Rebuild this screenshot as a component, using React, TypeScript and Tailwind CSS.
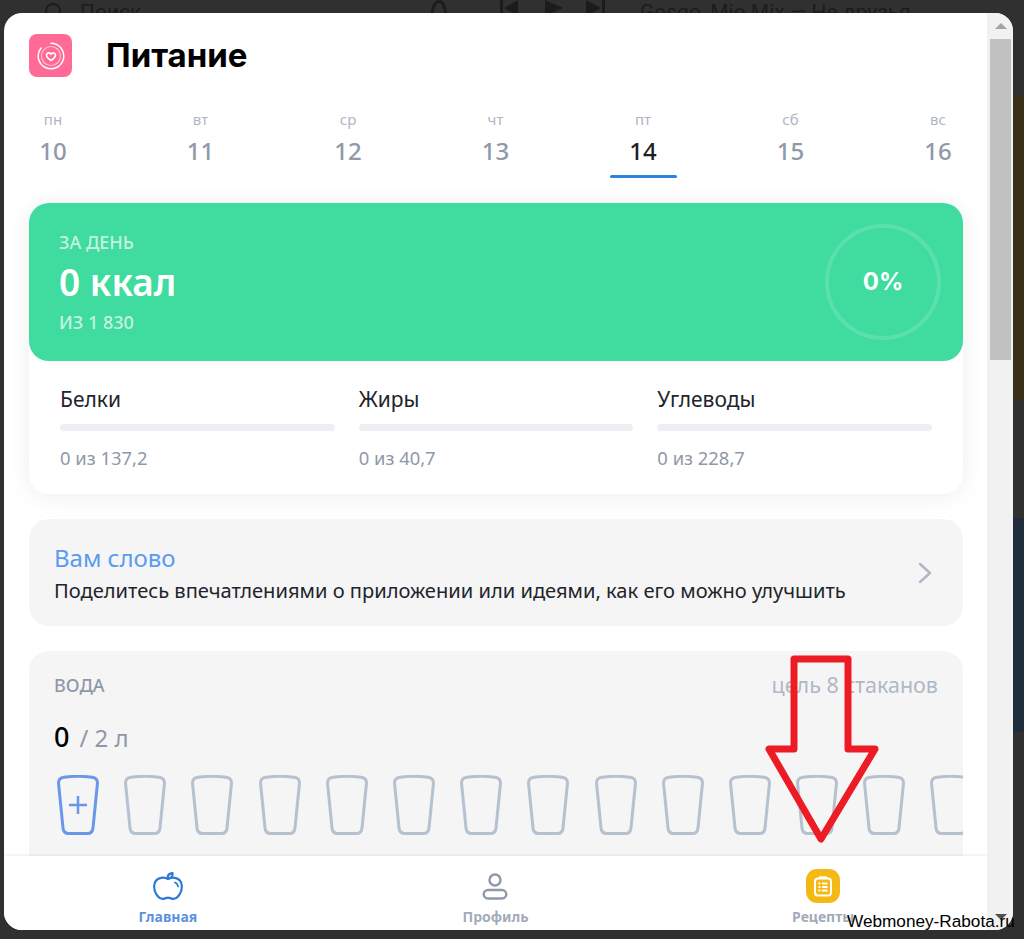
import React from 'react'

const days = [
  { name: 'пн', num: '10' },
  { name: 'вт', num: '11' },
  { name: 'ср', num: '12' },
  { name: 'чт', num: '13' },
  { name: 'пт', num: '14', active: true },
  { name: 'сб', num: '15' },
  { name: 'вс', num: '16' },
]

const macros = [
  { name: 'Белки', total: '0 из 137,2' },
  { name: 'Жиры', total: '0 из 40,7' },
  { name: 'Углеводы', total: '0 из 228,7' },
]

const Cup = ({ active }: { active?: boolean }) => (
  <svg className="shrink-0" width="42" height="60" viewBox="0 0 42 60" fill="none">
    <path
      d="M1.500 8C1.500 4 3.500 2.800 7 2.300C16 1.100 26 1.100 35 2.300C38.500 2.800 40.500 4 40.500 8L36 53C35.700 56.500 34 58.500 30.500 58.500H11.500C8 58.500 6.300 56.500 6 53Z"
      stroke={active ? '#6a97ea' : '#b6c1cf'}
      strokeWidth="3"
    />
    {active && <path d="M21 21V39M12 30H30" stroke="#6a97ea" strokeWidth="2.500" />}
  </svg>
)

const AppLogo = () => (
  <div className="flex h-[43px] w-[43px] items-center justify-center rounded-[8px] bg-[#ff6b96]">
    <svg width="28" height="28" viewBox="0 0 28 28" fill="none" stroke="white">
      <path d="M14 1.200A12.800 12.800 0 1 1 4 6" strokeWidth="1.500" strokeLinecap="round" />
      <circle cx="14" cy="14" r="9.500" strokeWidth="1.200" opacity="0.55" />
      <path d="M14 18.500C11.800 17 9.500 15.400 9.500 13C9.500 10.700 12.700 10 14 12.200C15.300 10 18.500 10.700 18.500 13C18.500 15.400 16.200 17 14 18.500Z" strokeWidth="1.600" />
    </svg>
  </div>
)

const AppleIcon = () => (
  <svg width="32" height="28" viewBox="0 0 32 28" fill="none" stroke="#2c7ad6" strokeWidth="2.200" strokeLinecap="round">
    <path d="M16 7C12 4.500 3 5 2.200 13.500C1.700 20 6 27 11 26.800C13 26.700 14.500 25.600 16 25.600C17.500 25.600 19 26.700 21 26.800C26 27 30.300 20 29.800 13.500C29 5 20 4.500 16 7Z" />
    <path d="M15.500 6.500C15.500 3.500 17 1.500 20.500 1.200C20.800 3.800 20 5.800 17.500 6.200" />
    <path d="M23 10.500C24.800 11.200 25.800 12.600 26 14.500" strokeWidth="1.800" />
  </svg>
)

const PersonIcon = () => (
  <svg width="26" height="27" viewBox="0 0 26 27" fill="none" stroke="#8e99a9" strokeWidth="2.400">
    <circle cx="13" cy="7" r="5.500" />
    <rect x="1.700" y="17" width="22.600" height="8.500" rx="4.250" />
  </svg>
)

const RecipeIcon = () => (
  <div className="flex h-[34px] w-[34px] items-center justify-center rounded-[11px] bg-[#f5b916]">
    <svg width="20" height="22" viewBox="0 0 20 22" fill="none" stroke="white">
      <rect x="2" y="3.500" width="16" height="17" rx="3" strokeWidth="2" />
      <path d="M7 2.500H13" strokeWidth="2.600" strokeLinecap="round" />
      <path d="M5.500 8.500H7.500M9 8.500H14.500M5.500 12H7.500M9 12H14.500M5.500 15.500H7.500M9 15.500H14.500" strokeWidth="2" />
    </svg>
  </div>
)

const RedArrow = () => (
  <svg className="absolute left-[762px] top-[652px]" width="122" height="194" viewBox="0 0 122 194" fill="none">
    <path
      d="M32 7H86V97H113L59 187L7 97H32Z"
      stroke="#ed1c24"
      strokeWidth="7"
      strokeLinejoin="round"
    />
  </svg>
)

const Scrollbar = () => (
  <div className="flex w-[26px] shrink-0 flex-col bg-[#f1f1f1] pl-[3px] pr-[2px]">
    <div className="flex h-[26px] items-center justify-center">
      <div className="h-0 w-0 border-x-[6px] border-b-[6px] border-x-transparent border-b-[#a3a3a3]" />
    </div>
    <div className="h-[321px] bg-[#c1c1c1]" />
    <div className="flex flex-1 items-end justify-center pb-[10px]">
      <div className="h-0 w-0 border-x-[6px] border-t-[6px] border-x-transparent border-t-[#505050]" />
    </div>
  </div>
)

const BackdropTop = () => (
  <div className="flex h-[13px] overflow-hidden bg-[#303030] font-['Roboto',sans-serif] text-[21px] leading-[24px] text-[#1c1c1c]">
    <svg className="ml-[44px] mt-[2px] shrink-0" width="20" height="20" viewBox="0 0 20 20" fill="none" stroke="#1c1c1c" strokeWidth="2">
      <circle cx="9" cy="9" r="7" />
    </svg>
    <span className="ml-[16px] w-[340px] shrink-0">Поиск</span>
    <svg className="mt-[-4px] shrink-0" width="190" height="24" viewBox="0 0 190 24" fill="#1c1c1c">
      <path d="M10 24C11 12 13 4 19 4C25 4 27 12 28 24H25C24 14 23 7 19 7C15 7 14 14 13 24Z" />
      <path d="M80 4V20H83V4ZM98 4L84 12L98 20Z" />
      <path d="M125 4L143 12L125 20Z" />
      <path d="M182 4V20H185V4ZM166 4L181 12L166 20Z" />
    </svg>
    <span className="ml-[30px] shrink-0 whitespace-nowrap">Gosgo, Mio Mix — Не друзья</span>
  </div>
)

const BackdropSide = () => (
  <div className="flex w-[11px] shrink-0 flex-col bg-[#303030]">
    <div className="mt-[82px] h-[305px] bg-[#392f1a]" />
    <div className="mt-[118px] h-[214px] bg-[#1f2c3b]" />
  </div>
)

export default function App() {
  return (
    <div className="relative h-[939px] w-[1024px] overflow-hidden bg-[#303030] font-['Noto_Sans',sans-serif]">
      <BackdropTop />
      <div className="flex">
        <div className="w-[4px] shrink-0" />
        <div className="flex h-[917px] w-[1009px] shrink-0 overflow-hidden rounded-[18px] bg-white">
          <div className="flex w-[983px] shrink-0 flex-col overflow-hidden">
            <header className="flex items-center pl-[25px] pt-[21px]">
              <AppLogo />
              <h1 className="ml-[34px] font-['Inter',sans-serif] text-[33px] font-bold leading-none text-black">Питание</h1>
            </header>

            <nav className="mt-[31px] flex h-[82px] shrink-0 justify-between px-[15.500px]">
              {days.map((d) => (
                <div key={d.num} className="flex w-[67px] flex-col items-center">
                  <span className="h-[22px] text-[15px] leading-[22px] text-[#aeb6c4]">{d.name}</span>
                  <span
                    className={`mt-[3.500px] h-[34px] text-[24px] font-medium leading-[34px] ${d.active ? 'text-[#1c1f26]' : 'text-[#8f99a9]'}`}
                  >
                    {d.num}
                  </span>
                  {d.active && <div className="mt-[7.500px] h-[3px] w-full rounded-full bg-[#2d81e0]" />}
                </div>
              ))}
            </nav>

            <div className="flex-1 overflow-hidden pl-[25px] pr-[24px] pt-[13px]">
              <section className="rounded-[20px] bg-white shadow-[0_2px_24px_rgba(0,0,0,0.07)]">
                <div className="flex h-[158px] items-center justify-between rounded-[20px] bg-[#3fdb9f] pl-[30px] pr-[22px]">
                  <div className="flex flex-col text-white">
                    <span className="text-[18px] font-medium leading-[22px] text-white/70">ЗА ДЕНЬ</span>
                    <span className="mt-[5px] text-[37px] font-semibold leading-[48px]">0 ккал</span>
                    <span className="mt-[5px] text-[18px] font-medium leading-[22px] text-white/70">ИЗ 1 830</span>
                  </div>
                  <div className="flex h-[116px] w-[116px] items-center justify-center rounded-full border-[4px] border-white/15">
                    <span className="font-['Inter',sans-serif] text-[24px] font-bold text-white">0%</span>
                  </div>
                </div>
                <div className="flex h-[133px] gap-6 px-[31px] pt-[23px]">
                  {macros.map((m) => (
                    <div key={m.name} className="flex-1">
                      <div className="text-[21px] leading-[30px] text-[#21242b]">{m.name}</div>
                      <div className="mt-[10px] h-[7px] rounded-full bg-[#eeeff4]" />
                      <div className="mt-[15px] text-[18.400px] leading-[24px] text-[#8f98a8]">{m.total}</div>
                    </div>
                  ))}
                </div>
              </section>

              <section className="mt-[25px] flex h-[107px] items-center justify-between rounded-[20px] bg-[#f5f5f5] pl-[25px] pr-[31px]">
                <div className="pt-[4px]">
                  <div className="text-[24px] leading-[32px] text-[#5b9bef]">Вам слово</div>
                  <div className="mt-[1px] text-[20.100px] leading-[32px] text-[#21242b]">
                    Поделитесь впечатлениями о приложении или идеями, как его можно улучшить
                  </div>
                </div>
                <svg width="14" height="24" viewBox="0 0 14 24" fill="none" stroke="#b0b8c6" strokeWidth="2.500" strokeLinecap="round" strokeLinejoin="round">
                  <path d="M2 3L12 12L2 21" />
                </svg>
              </section>

              <section className="mt-[25px] h-[300px] overflow-hidden rounded-[20px] bg-[#f5f5f5] pl-[25px] pr-[25px] pt-[20px]">
                <div className="flex items-center justify-between">
                  <span className="text-[18px] font-medium leading-[28px] text-[#8f98a8]">ВОДА</span>
                  <span className="text-[21.500px] leading-[28px] text-[#b0b8c6]">цель 8 стаканов</span>
                </div>
                <div className="mt-[20px] flex items-baseline text-[24px] leading-[36px] text-[#8f98a8]">
                  <span className="mr-[10px] text-[27px] font-medium text-black">0</span>
                  <span>/ 2 л</span>
                </div>
                <div className="mt-[19px] ml-[3px] flex gap-[25.200px]">
                  {Array.from({ length: 14 }).map((_, i) => (
                    <Cup key={i} active={i === 0} />
                  ))}
                </div>
              </section>
            </div>

            <footer className="grid h-[74px] shrink-0 grid-cols-3 bg-white shadow-[0_-1px_3px_rgba(0,0,0,0.08)]">
              <div className="flex flex-col items-center pt-[13px]">
                <div className="flex h-[34px] items-center"><AppleIcon /></div>
                <span className="mt-[4px] text-[14px] font-bold leading-[20px] text-[#5b93e0]">Главная</span>
              </div>
              <div className="flex flex-col items-center pt-[13px]">
                <div className="flex h-[34px] items-center"><PersonIcon /></div>
                <span className="mt-[4px] text-[14px] font-bold leading-[20px] text-[#a3abb8]">Профиль</span>
              </div>
              <div className="flex flex-col items-center pt-[13px]">
                <RecipeIcon />
                <span className="mt-[4px] text-[14px] font-bold leading-[20px] text-[#a3abb8]">Рецепты</span>
              </div>
            </footer>
          </div>
          <Scrollbar />
        </div>
        <BackdropSide />
      </div>

      <RedArrow />
      <span className="absolute left-[847px] top-[910px] font-['Liberation_Sans',sans-serif] text-[17.200px] leading-[22px] text-black">
        Webmoney-Rabota.ru
      </span>
    </div>
  )
}
